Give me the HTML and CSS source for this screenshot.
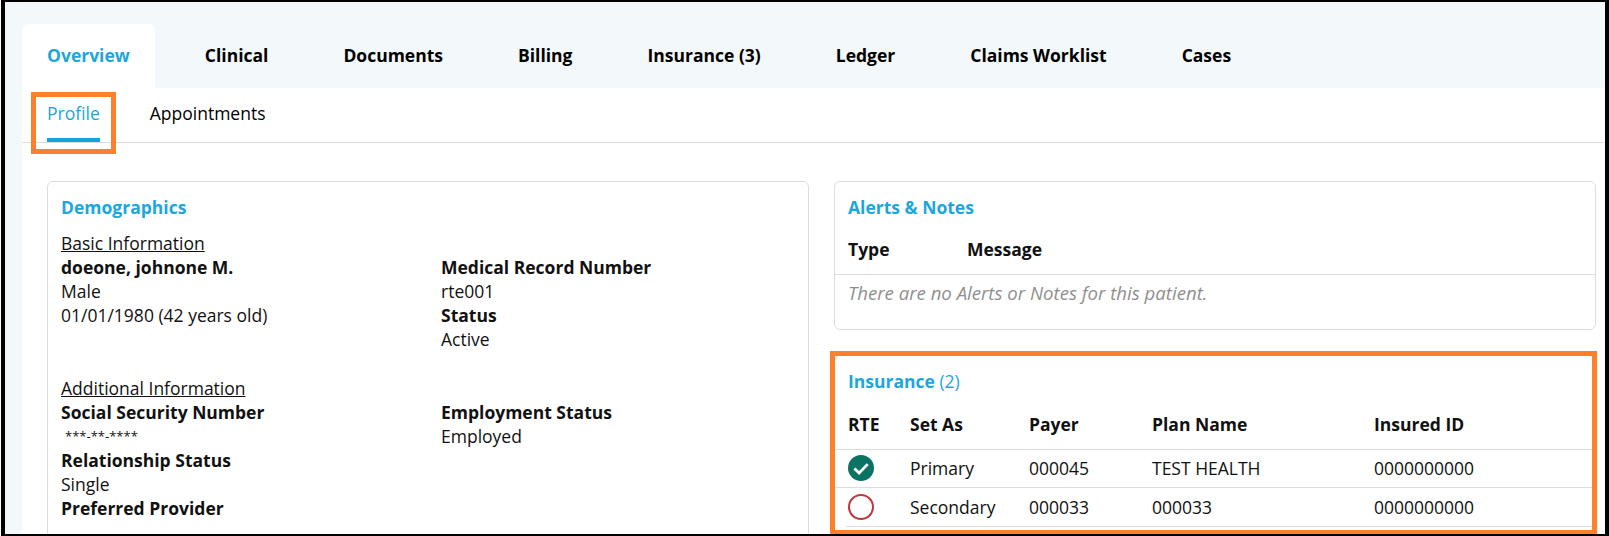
FILE: index.html
```html
<!DOCTYPE html>
<html>
<head>
  <meta http-equiv="Content-type" content="text/html; charset=utf-8">
  <link rel="stylesheet" href="styles.css">
</head>
<body>
<div class="frame">
  <div class="tabs">
    <a class="tab active">Overview</a>
    <a class="tab">Clinical</a>
    <a class="tab">Documents</a>
    <a class="tab">Billing</a>
    <a class="tab">Insurance (3)</a>
    <a class="tab">Ledger</a>
    <a class="tab">Claims Worklist</a>
    <a class="tab">Cases</a>
  </div>
  <div class="main">
    <div class="subtabs">
      <a class="subtab active">Profile</a>
      <a class="subtab">Appointments</a>
      <div class="callout callout-profile"></div>
    </div>
    <div class="columns">
      <div class="card demo">
        <h3>Demographics</h3>
        <div class="demo-grid">
          <div>
            <div class="sub">Basic Information</div>
            <b>doeone, johnone M.</b>
            <div>Male</div>
            <div>01/01/1980 (42 years old)</div>
          </div>
          <div class="demo-right">
            <b>Medical Record Number</b>
            <div>rte001</div>
            <b>Status</b>
            <div>Active</div>
          </div>
          <div class="demo-lower">
            <div class="sub">Additional Information</div>
            <b>Social Security Number</b>
            <div class="masked">***-**-****</div>
            <b>Relationship Status</b>
            <div>Single</div>
            <b>Preferred Provider</b>
          </div>
          <div class="demo-right demo-lower">
            <b>Employment Status</b>
            <div>Employed</div>
          </div>
        </div>
      </div>
      <div class="side">
        <div class="card alerts">
          <h3>Alerts &amp; Notes</h3>
          <div class="alert-head"><b class="type">Type</b><b>Message</b></div>
          <div class="empty">There are no Alerts or Notes for this patient.</div>
        </div>
        <div class="card insurance">
          <h3>Insurance <span class="count">(2)</span></h3>
          <table>
            <tr><th class="c1">RTE</th><th class="c2">Set As</th><th class="c3">Payer</th><th class="c4">Plan Name</th><th>Insured ID</th></tr>
            <tr class="row-a">
              <td><svg class="rte" viewBox="0 0 26 26"><circle cx="13" cy="13" r="13" fill="#0b7363"/><path d="M6.4 13.4l4.7 4.6 8.6-8.9" fill="none" stroke="#fff" stroke-width="2.8"/></svg></td>
              <td>Primary</td><td>000045</td><td>TEST HEALTH</td><td>0000000000</td>
            </tr>
            <tr class="row-b">
              <td><svg class="rte" viewBox="0 0 26 26"><circle cx="13" cy="13" r="12" fill="none" stroke="#c0363c" stroke-width="2"/></svg></td>
              <td>Secondary</td><td>000033</td><td>000033</td><td>0000000000</td>
            </tr>
          </table>
          <div class="last-line"></div>
          <div class="callout callout-insurance"></div>
        </div>
      </div>
    </div>
  </div>
</div>
</body>
</html>
```

FILE: styles.css
```css
* {
  box-sizing: border-box;
}

html, body {
  height: 100%;
}

body {
  margin: 0;
  overflow: hidden;
  background: #fff;
  color: #111;
  font-family: "Open Sans", sans-serif;
  font-size: 17.5px;
  line-height: 24px;
}

.frame {
  height: 536px;
  margin-left: 1px;
  border: solid #000;
  border-width: 2px 4px 2px 4px;
  padding-left: 17px;
  background: #f3f8fb;
  overflow: hidden;
}

.tabs {
  display: flex;
  height: 86px;
  padding-top: 22px;
  font-weight: 700;
}

.tab {
  height: 64px;
  padding: 19px 25px 0;
  margin-right: 25px;
  color: #000;
}

.tab.active {
  background: #fff;
  color: #1ba7dc;
  border-radius: 6px 6px 0 0;
}

.main {
  background: #fff;
  height: 446px;
}

.subtabs {
  position: relative;
  display: flex;
  height: 55px;
  border-bottom: 1px solid #ddd;
  padding-left: 25px;
}

.subtab {
  height: 54px;
  padding-top: 13px;
  margin-right: 50px;
  color: #000;
}

.subtab.active {
  color: #1ba7dc;
  border-bottom: 4px solid #12a5d9;
}

.callout {
  position: absolute;
  border: 5px solid #ff802a;
}

.callout-profile {
  left: 9px;
  top: 4px;
  width: 85px;
  height: 62px;
}

.columns {
  display: flex;
  padding: 38px 0 0 25px;
  gap: 25px;
}

.card {
  border: 1px solid #ddd;
  border-radius: 6px;
  background: #fff;
}

h3 {
  margin: 0;
  font-size: 17.5px;
  font-weight: 700;
  color: #1ba7dc;
}

.demo {
  width: 762px;
  height: 400px;
  padding: 13px 13px 0;
}

.demo-grid {
  display: grid;
  grid-template-columns: 380px 1fr;
  margin-top: 12px;
}

.demo-grid b {
  display: block;
}

.demo-right {
  padding-top: 24px;
}

.demo-lower {
  margin-top: 25px;
}

.sub {
  text-decoration: underline;
}

.masked {
  padding-left: 4px;
  font-size: 13px;
}

.side {
  width: 762px;
  display: flex;
  flex-direction: column;
  gap: 25px;
}

.alerts {
  height: 149px;
}

.alerts h3 {
  padding: 13px 13px 0;
}

.alert-head {
  display: flex;
  height: 56px;
  padding: 18px 13px 0;
  border-bottom: 1px solid #ddd;
}

.type {
  width: 119px;
}

.empty {
  padding: 6px 13px;
  color: #8f8f8f;
  font-size: 18.6px;
  font-style: italic;
}

.insurance {
  position: relative;
  height: 180px;
  border-bottom: 0;
}

.insurance h3 {
  padding: 13px 13px 0;
}

.count {
  font-weight: 400;
}

table {
  width: 100%;
  margin-top: 18px;
  border-collapse: collapse;
}

th, td {
  padding: 0;
  text-align: left;
  vertical-align: middle;
}

th {
  height: 38px;
  padding-bottom: 12px;
  font-weight: 700;
}

td {
  border-top: 1px solid #ddd;
}

.row-a td {
  height: 38px;
}

.row-b td {
  height: 39px;
}

th:first-child, td:first-child {
  padding-left: 13px;
}

.c1 {
  width: 75px;
}

.c2 {
  width: 119px;
}

.c3 {
  width: 123px;
}

.c4 {
  width: 222px;
}

.rte {
  display: block;
  width: 26px;
  height: 26px;
}

.last-line {
  margin-left: 11px;
  border-top: 1px solid #ddd;
}

.callout-insurance {
  left: -5px;
  top: -5px;
  width: 767px;
  height: 184px;
}
```
